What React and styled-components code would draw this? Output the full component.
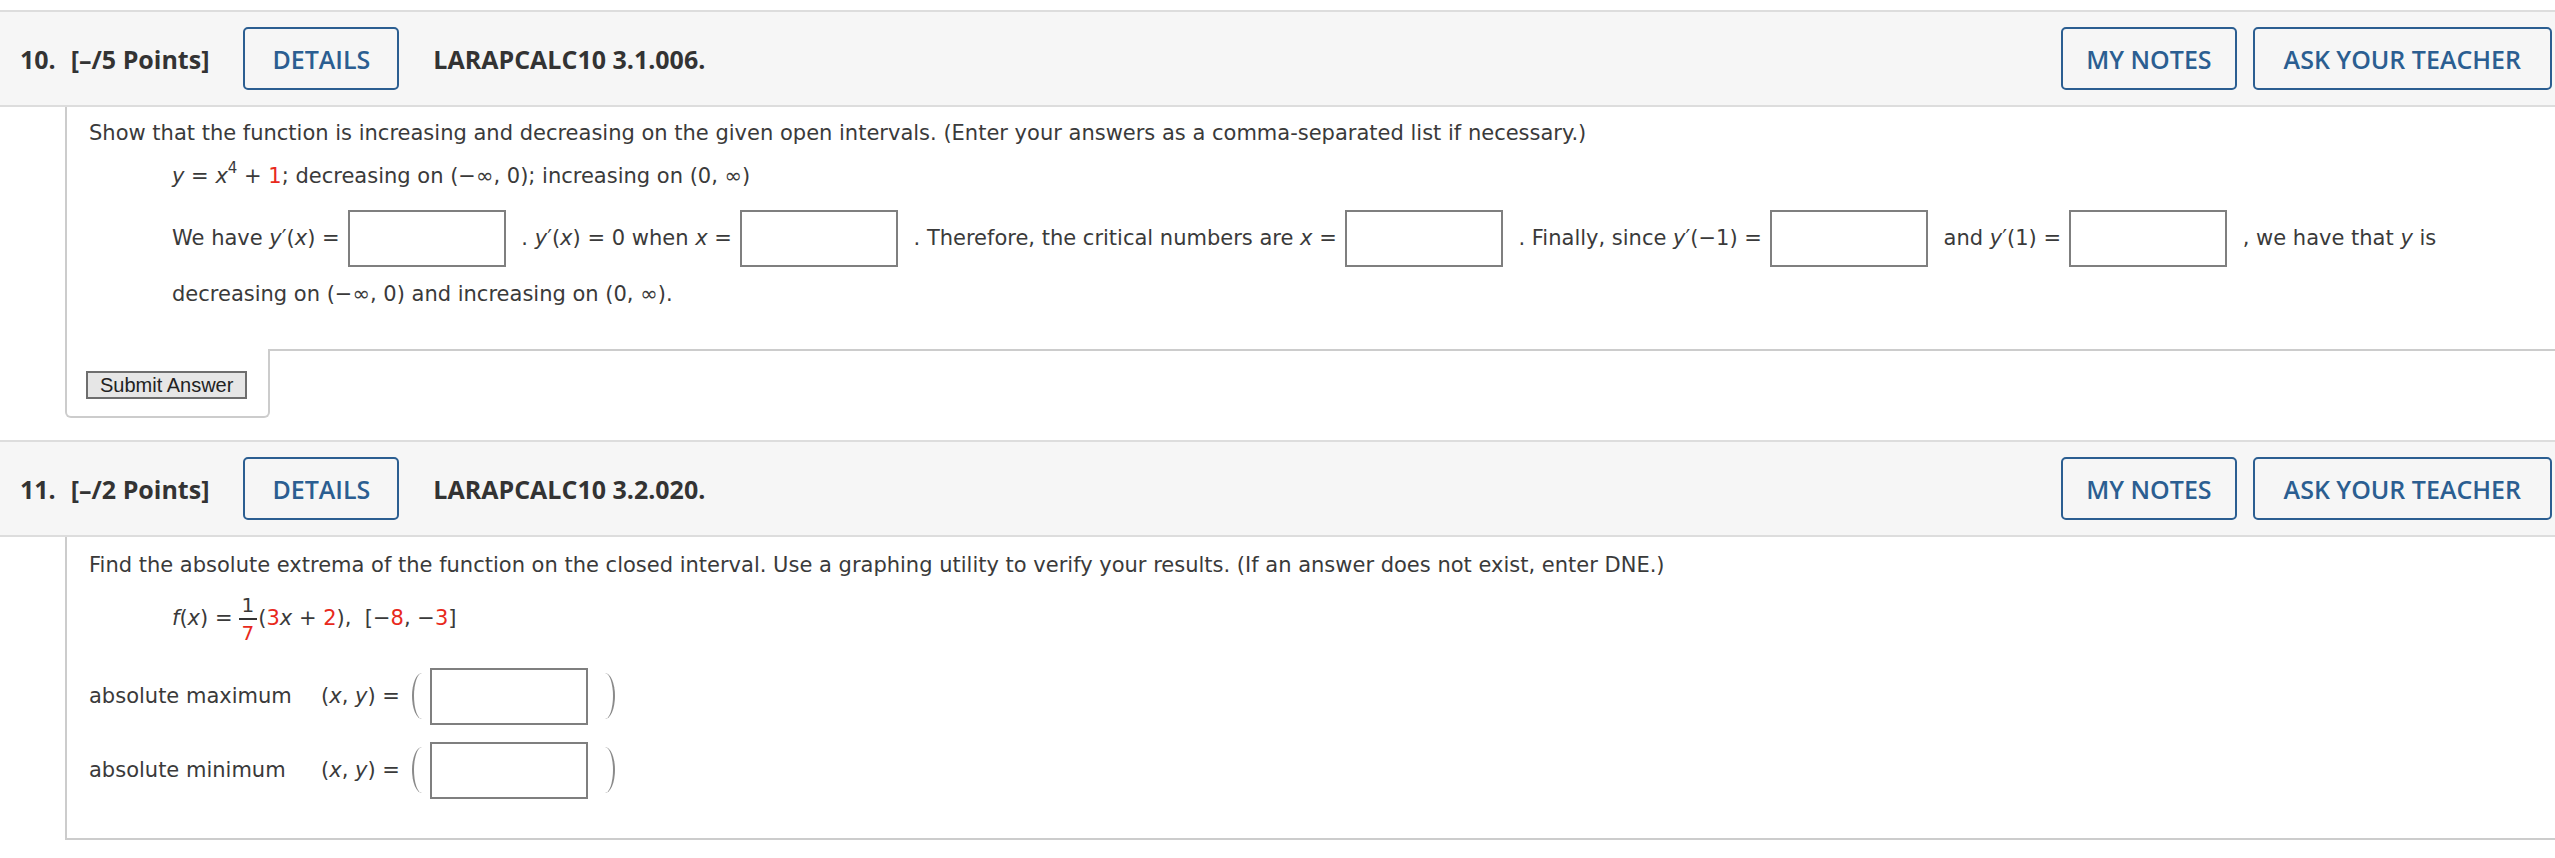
import styled, { createGlobalStyle } from 'styled-components';

const GlobalStyle = createGlobalStyle`
  html, body {
    margin: 0;
    padding: 0;
    background: #fff;
  }
  body {
    font-family: "DejaVu Sans", Verdana, sans-serif;
    color: #3a3a3a;
  }
`;

const Page = styled.div`
  padding-top: 10px;
`;

const Question = styled.section`
  margin-bottom: ${({ $gap }) => $gap || 0}px;
`;

const Header = styled.header`
  display: flex;
  align-items: center;
  height: 97px;
  box-sizing: border-box;
  padding: 0 3px 0 20px;
  background: #f6f6f6;
  border-top: 2px solid #dddddd;
  border-bottom: 2px solid #dddddd;
  font-family: "Open Sans", sans-serif;
  font-size: 25px;
  color: #333;
`;

const Number = styled.span`
  font-weight: 700;
  margin-right: 15px;
`;

const Points = styled.span`
  font-weight: 700;
`;

const Code = styled.span`
  font-weight: 700;
  margin-left: 34px;
`;

const OutlineButton = styled.button`
  height: 63px;
  box-sizing: border-box;
  padding: 0 ${({ $pad }) => $pad || 27}px;
  margin-left: ${({ $left }) => $left || 0}px;
  background: transparent;
  border: 2px solid #2b5e91;
  border-radius: 5px;
  color: #2b5e91;
  font-family: "Open Sans", sans-serif;
  font-size: 25px;
  font-weight: 600;
  cursor: pointer;
`;

const Spacer = styled.div`
  flex: 1;
`;

const Content = styled.div`
  margin-left: 65px;
  border-left: 2px solid #cccccc;
  border-bottom: ${({ $closed }) => ($closed ? '2px solid #cccccc' : 'none')};
  padding: ${({ $top }) => $top || 12}px 20px ${({ $bottom }) => $bottom}px 22px;
  font-size: 21px;
  line-height: 28px;
`;

const Prompt = styled.p`
  margin: 0;
`;

const Indent = styled.div`
  margin: ${({ $top }) => $top || 0}px 0 0 83px;
  line-height: ${({ $lh }) => $lh || 28}px;
`;

const Var = styled.i`
  font-style: italic;
`;

const Red = styled.span`
  color: #e8291c;
`;

const Sup = styled.sup`
  font-size: 15px;
  vertical-align: 10px;
  line-height: 0;
`;

const AnswerBox = styled.input.attrs({ type: 'text' })`
  width: 158px;
  height: 57px;
  box-sizing: border-box;
  margin: 0 9px 0 8px;
  padding: 0 8px;
  border: 2px solid #7f7f7f;
  border-radius: 0;
  background: #fff;
  vertical-align: middle;
  font-size: 20px;
  outline: none;
`;

const Fraction = styled.span`
  display: inline-flex;
  flex-direction: column;
  align-items: center;
  vertical-align: middle;
  margin: 0 1px 0 6px;
  font-size: 20px;
  line-height: 22px;
`;

const FracTop = styled.span`
  padding: 0 3px 2px;
  border-bottom: 2px solid #333;
`;

const FracBottom = styled.span`
  padding-top: 2px;
  color: #e8291c;
`;

const ExtremaRow = styled.div`
  display: flex;
  align-items: center;
  height: 58px;
  margin-top: ${({ $top }) => $top}px;
`;

const RowLabel = styled.span`
  width: 232px;
`;

const Paren = styled.span`
  display: inline-block;
  width: 10px;
  height: 46px;
  box-sizing: border-box;
  border-color: #8a8a8a;
  border-style: solid;
  border-width: ${({ $close }) => ($close ? '0 2px 0 0' : '0 0 0 2px')};
  border-radius: ${({ $close }) => ($close ? '0 10px 10px 0 / 0 23px 23px 0' : '10px 0 0 10px / 23px 0 0 23px')};
  margin: ${({ $close }) => ($close ? '0 0 0 8px' : '0 0 0 12px')};
`;

const SubmitRow = styled.div`
  display: flex;
  margin-left: 65px;
`;

const SubmitTab = styled.div`
  width: 205px;
  box-sizing: border-box;
  padding: 22px 0 17px 19px;
  border: 2px solid #cccccc;
  border-top: none;
  border-radius: 0 0 6px 6px;
`;

const Filler = styled.div`
  flex: 1;
  border-top: 2px solid #cccccc;
`;

const SubmitButton = styled.button`
  height: 28px;
  box-sizing: border-box;
  padding: 0 12px;
  background: #e6e6e6;
  border: 2px solid #6e6e6e;
  border-radius: 0;
  font-family: "Liberation Sans", Arial, sans-serif;
  font-size: 20px;
  line-height: 22px;
  color: #222;
  cursor: pointer;
`;

function QuestionHeader({ num, points, code }) {
  return (
    <Header>
      <Number>{num}.</Number>
      <Points>[–/{points} Points]</Points>
      <OutlineButton $left={34}>DETAILS</OutlineButton>
      <Code>{code}</Code>
      <Spacer />
      <OutlineButton $pad={23}>MY NOTES</OutlineButton>
      <OutlineButton $left={16} $pad={29}>ASK YOUR TEACHER</OutlineButton>
    </Header>
  );
}

const Yp = ({ arg }) => (
  <>
    <Var>y</Var>′({arg})
  </>
);

export default function App() {
  return (
    <>
      <GlobalStyle />
      <Page>
        <Question $gap={22}>
          <QuestionHeader num={10} points={5} code="LARAPCALC10 3.1.006." />
          <Content $bottom={28}>
            <Prompt>
              Show that the function is increasing and decreasing on the given open intervals. (Enter
              your answers as a comma-separated list if necessary.)
            </Prompt>
            <Indent $top={15}>
              <Var>y</Var> = <Var>x</Var>
              <Sup>4</Sup> + <Red>1</Red>; decreasing on (−∞, 0); increasing on (0, ∞)
            </Indent>
            <Indent $top={20} $lh={54}>
              We have <Yp arg={<Var>x</Var>} /> =<AnswerBox /> . <Yp arg={<Var>x</Var>} /> = 0 when{' '}
              <Var>x</Var> =<AnswerBox /> . Therefore, the critical numbers are <Var>x</Var> =
              <AnswerBox /> . Finally, since <Yp arg="−1" /> =<AnswerBox /> and <Yp arg="1" /> =
              <AnswerBox /> , we have that <Var>y</Var> is decreasing on (−∞, 0) and increasing on (0,
              ∞).
            </Indent>
          </Content>
          <SubmitRow>
            <SubmitTab>
              <SubmitButton>Submit Answer</SubmitButton>
            </SubmitTab>
            <Filler />
          </SubmitRow>
        </Question>

        <Question>
          <QuestionHeader num={11} points={2} code="LARAPCALC10 3.2.020." />
          <Content $closed $top={14} $bottom={39}>
            <Prompt>
              Find the absolute extrema of the function on the closed interval. Use a graphing utility
              to verify your results. (If an answer does not exist, enter DNE.)
            </Prompt>
            <Indent $top={15}>
              <Var>f</Var>(<Var>x</Var>) =
              <Fraction>
                <FracTop>1</FracTop>
                <FracBottom>7</FracBottom>
              </Fraction>
              (<Red>3</Red>
              <Var>x</Var> + <Red>2</Red>),&nbsp; [−<Red>8</Red>, −<Red>3</Red>]
            </Indent>
            <ExtremaRow $top={23}>
              <RowLabel>absolute maximum</RowLabel>
              (<Var>x</Var>,&nbsp;<Var>y</Var>)&nbsp;=
              <Paren />
              <AnswerBox />
              <Paren $close />
            </ExtremaRow>
            <ExtremaRow $top={16}>
              <RowLabel>absolute minimum</RowLabel>
              (<Var>x</Var>,&nbsp;<Var>y</Var>)&nbsp;=
              <Paren />
              <AnswerBox />
              <Paren $close />
            </ExtremaRow>
          </Content>
        </Question>
      </Page>
    </>
  );
}
